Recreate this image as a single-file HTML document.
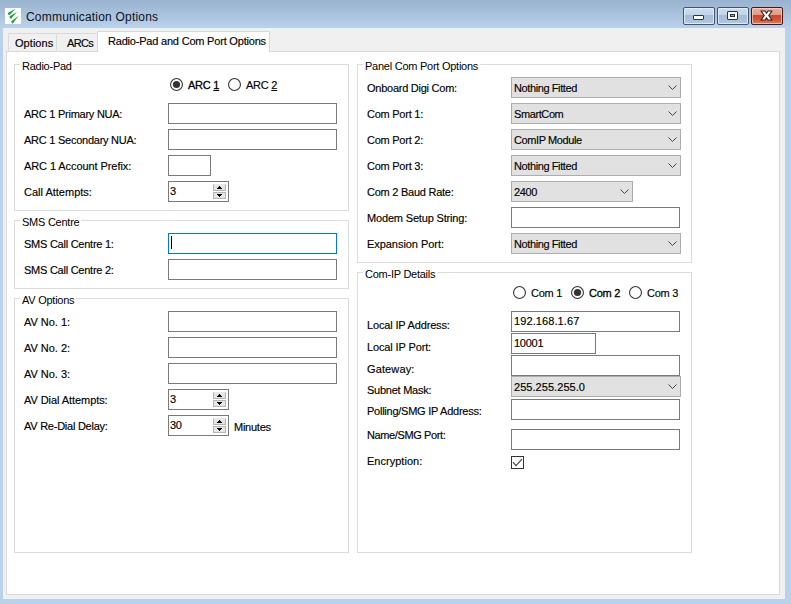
<!DOCTYPE html>
<html><head><meta charset="utf-8">
<style>
*{margin:0;padding:0;box-sizing:border-box}
html,body{width:791px;height:604px;overflow:hidden}
body{position:relative;background:#b9d1ea;font-family:"Liberation Sans",sans-serif;font-size:11px;color:#000}
.a{position:absolute}
.t{position:absolute;white-space:nowrap;font-size:11px;line-height:13px;letter-spacing:-0.25px;-webkit-text-stroke:0.15px #000}
#titlebar{left:0;top:0;width:791px;height:28px;background:linear-gradient(#98b2d0,#b2cae4 75%,#b9d1ea)}
#client{left:3px;top:28px;width:782px;height:571px;background:#f0f0f0}
#panel{left:6px;top:51px;width:774px;height:544px;background:#fff;border:1px solid #d9d9d9}
.tab{position:absolute;background:#f0f0f0;border:1px solid #d9d9d9;border-bottom:none}
.grp{position:absolute;border:1px solid #dcdcdc}
.gt{position:absolute;background:#fff;white-space:nowrap;font-size:11px;line-height:13px;letter-spacing:-0.25px;padding:0 2px}
.ed{position:absolute;background:#fff;border:1px solid #7a7a7a;height:21px}
.cb{position:absolute;background:#e1e1e1;border:1px solid #adadad;height:21px}
.chev{position:absolute;width:9px;height:6px}
.rad{position:absolute;width:13px;height:13px;border-radius:50%;border:1px solid #333;background:#fff}
.rad.on::after{content:"";position:absolute;left:2px;top:2px;width:7px;height:7px;border-radius:50%;background:#333}
.spin{position:absolute;width:13px;height:7px;background:#e8e8e8;border:1px solid #d0d0d0}
</style></head><body>
<div id="titlebar" class="a"></div>
<!-- icon -->
<div class="a" style="left:5px;top:8px;width:16px;height:16px;background:#fff">
<svg width="16" height="16" viewBox="0 0 16 16" style="position:absolute;left:0;top:0">
<path d="M2.7 5.1 Q3 7.3 4.5 7.2 L10.2 0.7 Z" fill="#1ea33e"/>
<path d="M4.3 8.6 Q4.6 10.8 6.1 10.7 L11.9 3.9 Z" fill="#1ea33e"/>
<path d="M6.1 13.5 Q6.4 15.7 7.9 15.6 L13.5 7.7 Z" fill="#1ea33e"/>
</svg></div>
<div class="t" style="left:26px;top:10px;font-size:12px;line-height:14px;letter-spacing:0.2px;color:#10101c;-webkit-text-stroke:0">Communication Options</div>
<!-- caption buttons -->
<div class="a" style="left:683px;top:7px;width:32px;height:18px;border:1px solid #465468;border-radius:2px;box-shadow:inset 0 0 0 1px rgba(235,243,252,0.75);background:linear-gradient(#cfdff0,#c1d3e9 44%,#a6bdd8 46%,#abc2dc 80%,#b9cfe6)"></div>
<div class="a" style="left:693px;top:15px;width:11px;height:5px;border:1px solid #30343a;background:#fff;border-radius:1px"></div>
<div class="a" style="left:717px;top:7px;width:32px;height:18px;border:1px solid #465468;border-radius:2px;box-shadow:inset 0 0 0 1px rgba(235,243,252,0.75);background:linear-gradient(#cfdff0,#c1d3e9 44%,#a6bdd8 46%,#abc2dc 80%,#b9cfe6)"></div>
<div class="a" style="left:727px;top:11px;width:11px;height:9px;border:1px solid #30343a;background:#fafafa;border-radius:1px"></div>
<div class="a" style="left:730px;top:14px;width:5px;height:3px;border:1px solid #30343a;background:#8fb0d8"></div>
<div class="a" style="left:751px;top:7px;width:32px;height:18px;border:1px solid #4a1414;border-radius:2px;box-shadow:inset 0 0 0 1px rgba(250,215,200,0.7);background:linear-gradient(#eab0a0,#e09a86 44%,#c9462c 47%,#cf5a3e 75%,#dc8068)"></div>
<svg class="a" style="left:760px;top:10px" width="13" height="11" viewBox="0 0 13 11">
<path d="M1 1 L5 1 L6.5 3.3 L8 1 L12 1 L8.7 5.5 L12 10 L8 10 L6.5 7.7 L5 10 L1 10 L4.3 5.5 Z" fill="#fff" stroke="#2e1e24" stroke-width="1.1" stroke-linejoin="round"/>
</svg>

<div id="client" class="a"></div>
<div id="panel" class="a"></div>
<!-- tabs -->
<div class="tab" style="left:8px;top:33px;width:49px;height:18px"></div>
<div class="t" style="left:15px;top:37px;letter-spacing:0.05px">Options</div>
<div class="tab" style="left:56px;top:33px;width:42px;height:18px"></div>
<div class="t" style="left:67px;top:37px;letter-spacing:-0.65px">ARCs</div>
<div class="tab" style="left:97px;top:31px;width:173px;height:21px;background:#fff"></div>
<div class="t" style="left:108px;top:35px;letter-spacing:-0.2px">Radio-Pad and Com Port Options</div>
<!-- Radio-Pad group -->
<div class="grp" style="left:14px;top:64px;width:335px;height:147px"></div>
<div class="gt" style="left:20px;top:60px">Radio-Pad</div>
<svg class="a" style="left:170px;top:78px" width="13" height="13"><circle cx="6.5" cy="6.5" r="5.95" fill="#fff" stroke="#333" stroke-width="1.1"/><circle cx="6.5" cy="6.5" r="3.6" fill="#333"/></svg>
<div class="t" style="left:188px;top:79px;-webkit-text-stroke:0.3px #000">ARC <u>1</u></div>
<svg class="a" style="left:228px;top:78px" width="13" height="13"><circle cx="6.5" cy="6.5" r="5.95" fill="#fff" stroke="#333" stroke-width="1.1"/></svg>
<div class="t" style="left:246px;top:79px">ARC <u>2</u></div>
<div class="t" style="left:24px;top:108px">ARC 1 Primary NUA:</div>
<div class="ed" style="left:168px;top:103px;width:169px"></div>
<div class="t" style="left:24px;top:134px">ARC 1 Secondary NUA:</div>
<div class="ed" style="left:168px;top:129px;width:169px"></div>
<div class="t" style="left:24px;top:160px;letter-spacing:-0.08px">ARC 1 Account Prefix:</div>
<div class="ed" style="left:168px;top:155px;width:43px"></div>
<div class="t" style="left:24px;top:186px;letter-spacing:0px">Call Attempts:</div>
<div class="ed" style="left:168px;top:181px;width:61px"></div>
<div class="t" style="left:170px;top:185px">3</div>
<!-- SMS group -->
<div class="grp" style="left:14px;top:220px;width:335px;height:69px"></div>
<div class="gt" style="left:20px;top:216px">SMS Centre</div>
<div class="t" style="left:24px;top:238px">SMS Call Centre 1:</div>
<div class="ed" style="left:168px;top:233px;width:169px;border-color:#0078d7"></div>
<div class="a" style="left:171px;top:236px;width:1px;height:13px;background:#000"></div>
<div class="t" style="left:24px;top:264px">SMS Call Centre 2:</div>
<div class="ed" style="left:168px;top:259px;width:169px"></div>
<!-- AV group -->
<div class="grp" style="left:14px;top:298px;width:335px;height:255px"></div>
<div class="gt" style="left:20px;top:294px">AV Options</div>
<div class="t" style="left:24px;top:316px;letter-spacing:-0.03px">AV No. 1:</div>
<div class="ed" style="left:168px;top:311px;width:169px"></div>
<div class="t" style="left:24px;top:342px;letter-spacing:-0.03px">AV No. 2:</div>
<div class="ed" style="left:168px;top:337px;width:169px"></div>
<div class="t" style="left:24px;top:368px;letter-spacing:-0.03px">AV No. 3:</div>
<div class="ed" style="left:168px;top:363px;width:169px"></div>
<div class="t" style="left:24px;top:394px;letter-spacing:-0.07px">AV Dial Attempts:</div>
<div class="ed" style="left:168px;top:389px;width:61px"></div>
<div class="t" style="left:170px;top:393px">3</div>
<div class="t" style="left:24px;top:420px">AV Re-Dial Delay:</div>
<div class="ed" style="left:168px;top:415px;width:61px"></div>
<div class="t" style="left:170px;top:419px">30</div>
<div class="t" style="left:234px;top:421px">Minutes</div>
<!-- Panel Com Port Options -->
<div class="grp" style="left:357px;top:64px;width:335px;height:199px"></div>
<div class="gt" style="left:363px;top:60px">Panel Com Port Options</div>
<div class="t" style="left:367px;top:82px">Onboard Digi Com:</div>
<div class="cb" style="left:511px;top:77px;width:170px"></div>
<div class="t" style="left:514px;top:82px;letter-spacing:-0.4px">Nothing Fitted</div>
<div class="t" style="left:367px;top:108px">Com Port 1:</div>
<div class="cb" style="left:511px;top:103px;width:170px"></div>
<div class="t" style="left:514px;top:108px;letter-spacing:-0.4px">SmartCom</div>
<div class="t" style="left:367px;top:134px">Com Port 2:</div>
<div class="cb" style="left:511px;top:129px;width:170px"></div>
<div class="t" style="left:514px;top:134px;letter-spacing:-0.4px">ComIP Module</div>
<div class="t" style="left:367px;top:160px">Com Port 3:</div>
<div class="cb" style="left:511px;top:155px;width:170px"></div>
<div class="t" style="left:514px;top:160px;letter-spacing:-0.4px">Nothing Fitted</div>
<div class="t" style="left:367px;top:186px">Com 2 Baud Rate:</div>
<div class="cb" style="left:511px;top:181px;width:122px"></div>
<div class="t" style="left:514px;top:186px;letter-spacing:-0.4px">2400</div>
<div class="t" style="left:367px;top:212px;letter-spacing:-0.17px">Modem Setup String:</div>
<div class="ed" style="left:511px;top:207px;width:169px"></div>
<div class="t" style="left:367px;top:238px;letter-spacing:-0.05px">Expansion Port:</div>
<div class="cb" style="left:511px;top:233px;width:170px"></div>
<div class="t" style="left:514px;top:238px;letter-spacing:-0.4px">Nothing Fitted</div>
<!-- Com-IP Details -->
<div class="grp" style="left:357px;top:272px;width:335px;height:281px"></div>
<div class="gt" style="left:363px;top:268px">Com-IP Details</div>
<svg class="a" style="left:513px;top:286px" width="13" height="13"><circle cx="6.5" cy="6.5" r="5.95" fill="#fff" stroke="#333" stroke-width="1.1"/></svg>
<div class="t" style="left:531px;top:287px">Com 1</div>
<svg class="a" style="left:571px;top:286px" width="13" height="13"><circle cx="6.5" cy="6.5" r="5.95" fill="#fff" stroke="#333" stroke-width="1.1"/><circle cx="6.5" cy="6.5" r="3.6" fill="#333"/></svg>
<div class="t" style="left:589px;top:287px;-webkit-text-stroke:0.3px #000">Com 2</div>
<svg class="a" style="left:629px;top:286px" width="13" height="13"><circle cx="6.5" cy="6.5" r="5.95" fill="#fff" stroke="#333" stroke-width="1.1"/></svg>
<div class="t" style="left:647px;top:287px">Com 3</div>
<div class="t" style="left:367px;top:319px;letter-spacing:-0.16px">Local IP Address:</div>
<div class="ed" style="left:511px;top:311px;width:169px"></div>
<div class="t" style="left:514px;top:315px;letter-spacing:0.1px">192.168.1.67</div>
<div class="t" style="left:367px;top:341px;letter-spacing:-0.13px">Local IP Port:</div>
<div class="ed" style="left:511px;top:333px;width:85px"></div>
<div class="t" style="left:514px;top:337px">10001</div>
<div class="t" style="left:367px;top:363px;letter-spacing:0.12px">Gateway:</div>
<div class="ed" style="left:511px;top:355px;width:169px"></div>
<div class="t" style="left:367px;top:384px">Subnet Mask:</div>
<div class="cb" style="left:511px;top:376px;width:170px"></div>
<div class="t" style="left:514px;top:381px;letter-spacing:0.05px">255.255.255.0</div>
<div class="t" style="left:367px;top:405px">Polling/SMG IP Address:</div>
<div class="ed" style="left:511px;top:399px;width:169px"></div>
<div class="t" style="left:367px;top:429px;letter-spacing:-0.38px">Name/SMG Port:</div>
<div class="ed" style="left:511px;top:429px;width:169px"></div>
<div class="t" style="left:367px;top:455px;letter-spacing:0.02px">Encryption:</div>
<div class="a" style="left:511px;top:456px;width:13px;height:13px;border:1px solid #333;background:#fff"></div>
<svg class="a" style="left:511px;top:456px" width="13" height="13" viewBox="0 0 13 13"><path d="M2 6.2 L5 9.6 L11 3.2" stroke="#3c3c3c" stroke-width="1.1" fill="none"/></svg>
<svg class="a" style="left:668px;top:85px" width="10" height="6" viewBox="0 0 10 6"><path d="M0.5 0.5 L4.5 4.5 L8.5 0.5" stroke="#444" stroke-width="1" fill="none"/></svg>
<svg class="a" style="left:668px;top:111px" width="10" height="6" viewBox="0 0 10 6"><path d="M0.5 0.5 L4.5 4.5 L8.5 0.5" stroke="#444" stroke-width="1" fill="none"/></svg>
<svg class="a" style="left:668px;top:137px" width="10" height="6" viewBox="0 0 10 6"><path d="M0.5 0.5 L4.5 4.5 L8.5 0.5" stroke="#444" stroke-width="1" fill="none"/></svg>
<svg class="a" style="left:668px;top:163px" width="10" height="6" viewBox="0 0 10 6"><path d="M0.5 0.5 L4.5 4.5 L8.5 0.5" stroke="#444" stroke-width="1" fill="none"/></svg>
<svg class="a" style="left:668px;top:241px" width="10" height="6" viewBox="0 0 10 6"><path d="M0.5 0.5 L4.5 4.5 L8.5 0.5" stroke="#444" stroke-width="1" fill="none"/></svg>
<svg class="a" style="left:668px;top:384px" width="10" height="6" viewBox="0 0 10 6"><path d="M0.5 0.5 L4.5 4.5 L8.5 0.5" stroke="#444" stroke-width="1" fill="none"/></svg>
<svg class="a" style="left:620px;top:189px" width="10" height="6" viewBox="0 0 10 6"><path d="M0.5 0.5 L4.5 4.5 L8.5 0.5" stroke="#444" stroke-width="1" fill="none"/></svg>
<div class="a" style="left:213px;top:184px;width:13px;height:7px;background:#e6e6e6;border:1px solid #b4b4b4;border-top-color:#e9e9e9"></div><div class="a" style="left:213px;top:192px;width:13px;height:7px;background:#e6e6e6;border:1px solid #b4b4b4"></div><svg class="a" style="left:217px;top:186px" width="5" height="3" shape-rendering="crispEdges"><rect x="2" y="0" width="1" height="1"/><rect x="1" y="1" width="3" height="1"/><rect x="0" y="2" width="5" height="1"/></svg><svg class="a" style="left:217px;top:194px" width="5" height="3" shape-rendering="crispEdges"><rect x="0" y="0" width="5" height="1"/><rect x="1" y="1" width="3" height="1"/><rect x="2" y="2" width="1" height="1"/></svg>
<div class="a" style="left:213px;top:392px;width:13px;height:7px;background:#e6e6e6;border:1px solid #b4b4b4;border-top-color:#e9e9e9"></div><div class="a" style="left:213px;top:400px;width:13px;height:7px;background:#e6e6e6;border:1px solid #b4b4b4"></div><svg class="a" style="left:217px;top:394px" width="5" height="3" shape-rendering="crispEdges"><rect x="2" y="0" width="1" height="1"/><rect x="1" y="1" width="3" height="1"/><rect x="0" y="2" width="5" height="1"/></svg><svg class="a" style="left:217px;top:402px" width="5" height="3" shape-rendering="crispEdges"><rect x="0" y="0" width="5" height="1"/><rect x="1" y="1" width="3" height="1"/><rect x="2" y="2" width="1" height="1"/></svg>
<div class="a" style="left:213px;top:418px;width:13px;height:7px;background:#e6e6e6;border:1px solid #b4b4b4;border-top-color:#e9e9e9"></div><div class="a" style="left:213px;top:426px;width:13px;height:7px;background:#e6e6e6;border:1px solid #b4b4b4"></div><svg class="a" style="left:217px;top:420px" width="5" height="3" shape-rendering="crispEdges"><rect x="2" y="0" width="1" height="1"/><rect x="1" y="1" width="3" height="1"/><rect x="0" y="2" width="5" height="1"/></svg><svg class="a" style="left:217px;top:428px" width="5" height="3" shape-rendering="crispEdges"><rect x="0" y="0" width="5" height="1"/><rect x="1" y="1" width="3" height="1"/><rect x="2" y="2" width="1" height="1"/></svg>
</body></html>
